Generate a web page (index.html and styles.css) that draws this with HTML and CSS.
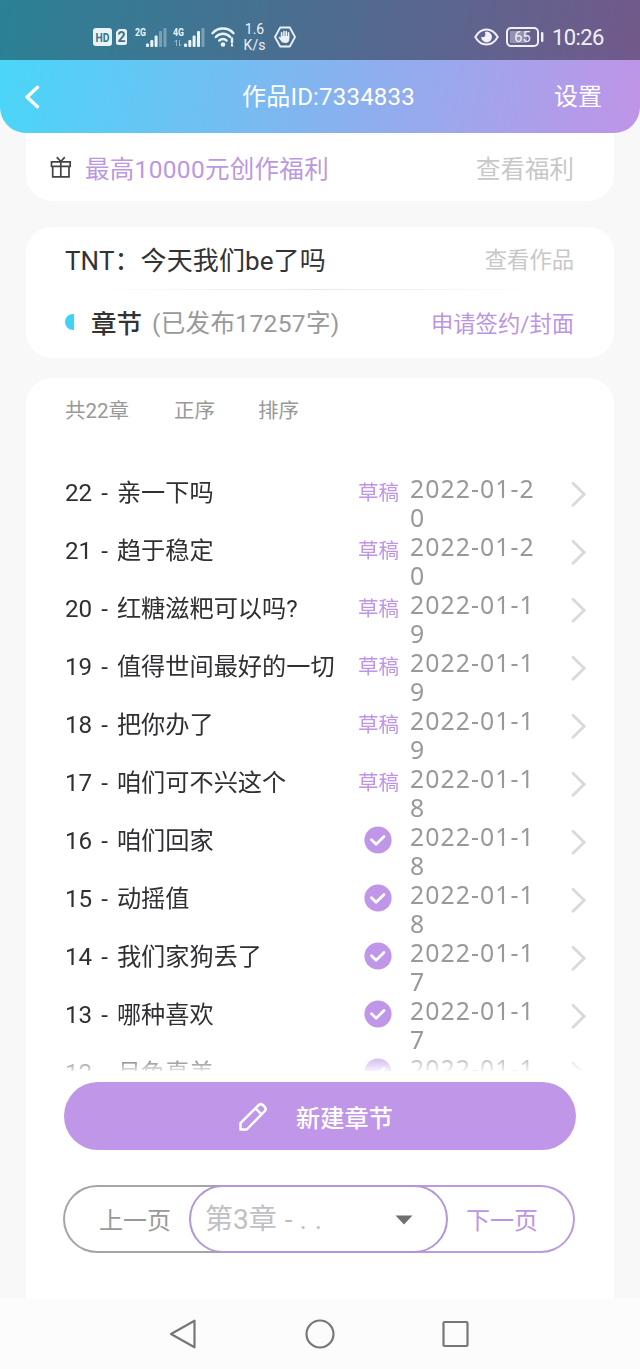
FILE: index.html
```html
<!DOCTYPE html>
<html lang="zh-CN">
<head>
    <meta charset="UTF-8">
    <meta name="viewport" content="width=device-width, initial-scale=1.0">
    <title>作品管理</title>
    <link rel="stylesheet" href="styles.css">
</head>
<body>

<svg class="symbols" width="0" height="0">
    <symbol id="check" viewBox="0 0 28 28">
        <circle cx="14" cy="14" r="13.6" fill="#bf96e8"/>
        <path d="M7.5 13.8l4.6 4.4 7.9-7.7" fill="none" stroke="#fff" stroke-width="2.8" stroke-linecap="round" stroke-linejoin="round"/>
    </symbol>
    <symbol id="arrow" viewBox="0 0 16 26">
        <path d="M2 2.3l11.2 10.9L2 24.2" fill="none" stroke="#d9d9d9" stroke-width="2.8" stroke-linecap="round"/>
    </symbol>
</svg>

<div class="top">
    <div class="status-bar">
        <svg class="hd" width="35" height="20" viewBox="0 0 35 20">
            <rect x="0" y="1" width="19" height="18" rx="3" fill="#eaf4f8"/>
            <text x="9.5" y="14.5" font-size="12" font-weight="700" fill="#3b7389" text-anchor="middle" textLength="14" lengthAdjust="spacingAndGlyphs">HD</text>
            <path d="M26 2h5.500a2.500 2.500 0 0 1 2.500 2.500v11a2.500 2.500 0 0 1-2.500 2.500H25.500a2.500 2.500 0 0 1-2.500-2.500V5z" fill="#eaf4f8"/>
            <text x="28.500" y="15" font-size="14" font-weight="700" fill="#3b7389" text-anchor="middle">2</text>
        </svg>
        <svg class="signal" width="33" height="22" viewBox="0 0 33 22">
            <text x="0" y="10" font-size="11.500" font-weight="700" fill="#eaf4f8" textLength="11" lengthAdjust="spacingAndGlyphs">2G</text>
            <g fill="#eaf4f8">
                <rect x="11" y="17.500" width="3" height="3.500" rx="1"/>
                <rect x="15.300" y="14" width="3" height="7" rx="1"/>
                <rect x="19.600" y="9.500" width="3" height="11.500" rx="1"/>
                <rect x="24" y="5" width="3" height="16" rx="1" opacity=".35"/>
                <rect x="28.500" y="2" width="3" height="19" rx="1" opacity=".35"/>
            </g>
        </svg>
        <svg class="signal" width="33" height="22" viewBox="0 0 33 22">
            <text x="0" y="10" font-size="11.500" font-weight="700" fill="#eaf4f8" textLength="11" lengthAdjust="spacingAndGlyphs">4G</text>
            <path d="M3.500 20v-6l-2 2M6.500 14v6l2-2" fill="none" stroke="#eaf4f8" opacity=".5"/>
            <g fill="#eaf4f8">
                <rect x="11" y="17.500" width="3" height="3.500" rx="1"/>
                <rect x="15.300" y="14" width="3" height="7" rx="1"/>
                <rect x="19.600" y="9.500" width="3" height="11.500" rx="1"/>
                <rect x="24" y="5" width="3" height="16" rx="1"/>
                <rect x="28.500" y="2" width="3" height="19" rx="1" opacity=".35"/>
            </g>
        </svg>
        <svg class="wifi" width="24" height="22" viewBox="0 0 24 22">
            <g fill="none" stroke="#eaf4f8" stroke-width="2.400" stroke-linecap="round">
                <path d="M1.500 7.200c5.500-6.200 15.500-6.200 21 0"/>
                <path d="M4.800 11c4-4.300 10.400-4.300 14.400 0"/>
                <path d="M8.200 14.600c2.200-2.200 5.400-2.200 7.400 0"/>
                <path d="M21 12.500v4M21 19.300v.1"/>
            </g>
            <circle cx="12" cy="18.500" r="2.300" fill="#eaf4f8"/>
        </svg>
        <div class="speed">1.6<br>K/s</div>
        <svg class="hand" width="22" height="22" viewBox="0 0 22 22">
            <path d="M6.200 1.500h9.600L21 11l-5.200 9.500H6.200L1 11z" fill="none" stroke="#eaf1f8" stroke-width="1.800" stroke-linejoin="round"/>
            <path d="M7.600 12V6.800M9.900 10V5.500M12.200 10V5.500M14.500 12V6.800M5.500 11.500l3 4" stroke="#eaf1f8" stroke-width="1.600" stroke-linecap="round"/>
            <path d="M6.800 10h8.500v3q0 4-4 4-3 0-4.500-3.500z" fill="#eaf1f8"/>
        </svg>
        <svg class="eye" width="25" height="18" viewBox="0 0 25 18">
            <path d="M1.300 9C7-1 18-1 23.700 9 18 19 7 19 1.300 9z" fill="none" stroke="#f1eff8" stroke-width="2"/>
            <path d="M12.500 3.600a5.400 5.400 0 1 1-5.300 5q2 1.200 3.500-.2 1.200-1.500.2-4.400z" fill="#f1eff8"/>
        </svg>
        <svg class="battery" width="38" height="20" viewBox="0 0 38 20">
            <rect x="1" y="1" width="31" height="18" rx="4" fill="none" stroke="#f1eff8" stroke-width="2"/>
            <rect x="4" y="4" width="17" height="12" rx="1" fill="#f1eff8" opacity=".35"/>
            <rect x="35" y="5" width="2.400" height="10" rx="1" fill="#f1eff8"/>
            <text x="16.500" y="15" font-size="14.500" fill="#f1eff8" text-anchor="middle">65</text>
        </svg>
        <div class="time">10:26</div>
    </div>
    <div class="header">
        <svg class="back" width="16" height="24" viewBox="0 0 16 24">
            <path d="M13.500 2.300L3 12l10.500 9.700" fill="none" stroke="#fff" stroke-width="3.400" stroke-linecap="round" stroke-linejoin="round"/>
        </svg>
        <h1>作品ID:7334833</h1>
        <a class="settings">设置</a>
    </div>
</div>

<div class="card welfare">
    <svg class="gift" width="22" height="23" viewBox="0 0 22 23">
        <path d="M1.500 5.800h18.700v4.500H1.500zM2.700 10.300v10.500H19V10.300M10.800 5.800v15M6.800 1.200l4 4.300 4-4.300" fill="none" stroke="#444" stroke-width="1.700"/>
    </svg>
    <span class="welfare-title">最高10000元创作福利</span>
    <span class="more">查看福利</span>
</div>

<div class="card work">
    <div class="work-row">
        <span class="work-title">TNT：<span>今天我们be了吗</span></span>
        <span class="more">查看作品</span>
    </div>
    <div class="divider"></div>
    <div class="work-row chapter-row">
        <span class="half-dot"></span>
        <span class="chapter-label">章节</span>
        <span class="count">(已发布17257字)</span>
        <span class="apply">申请签约/封面</span>
    </div>
</div>

<div class="card chapters">
    <div class="toolbar">
        <span class="total">共22章</span>
        <span class="order">正序</span>
        <span>排序</span>
    </div>
    <div class="list">
        <div class="row">
            <span class="name">22 - <b>亲一下吗</b></span>
            <span class="state">草稿</span>
            <span class="date">2022-01-20</span>
            <svg class="arrow"><use href="#arrow"/></svg>
        </div>
        <div class="row">
            <span class="name">21 - <b>趋于稳定</b></span>
            <span class="state">草稿</span>
            <span class="date">2022-01-20</span>
            <svg class="arrow"><use href="#arrow"/></svg>
        </div>
        <div class="row">
            <span class="name">20 - <b>红糖滋粑可以吗?</b></span>
            <span class="state">草稿</span>
            <span class="date">2022-01-19</span>
            <svg class="arrow"><use href="#arrow"/></svg>
        </div>
        <div class="row">
            <span class="name">19 - <b>值得世间最好的一切</b></span>
            <span class="state">草稿</span>
            <span class="date">2022-01-19</span>
            <svg class="arrow"><use href="#arrow"/></svg>
        </div>
        <div class="row">
            <span class="name">18 - <b>把你办了</b></span>
            <span class="state">草稿</span>
            <span class="date">2022-01-19</span>
            <svg class="arrow"><use href="#arrow"/></svg>
        </div>
        <div class="row">
            <span class="name">17 - <b>咱们可不兴这个</b></span>
            <span class="state">草稿</span>
            <span class="date">2022-01-18</span>
            <svg class="arrow"><use href="#arrow"/></svg>
        </div>
        <div class="row">
            <span class="name">16 - <b>咱们回家</b></span>
            <span class="state"><svg class="check"><use href="#check"/></svg></span>
            <span class="date">2022-01-18</span>
            <svg class="arrow"><use href="#arrow"/></svg>
        </div>
        <div class="row">
            <span class="name">15 - <b>动摇值</b></span>
            <span class="state"><svg class="check"><use href="#check"/></svg></span>
            <span class="date">2022-01-18</span>
            <svg class="arrow"><use href="#arrow"/></svg>
        </div>
        <div class="row">
            <span class="name">14 - <b>我们家狗丢了</b></span>
            <span class="state"><svg class="check"><use href="#check"/></svg></span>
            <span class="date">2022-01-17</span>
            <svg class="arrow"><use href="#arrow"/></svg>
        </div>
        <div class="row">
            <span class="name">13 - <b>哪种喜欢</b></span>
            <span class="state"><svg class="check"><use href="#check"/></svg></span>
            <span class="date">2022-01-17</span>
            <svg class="arrow"><use href="#arrow"/></svg>
        </div>
        <div class="row">
            <span class="name">12 - <b>月色真美</b></span>
            <span class="state"><svg class="check"><use href="#check"/></svg></span>
            <span class="date">2022-01-17</span>
            <svg class="arrow"><use href="#arrow"/></svg>
        </div>
    </div>

    <button class="create">
        <svg width="30" height="30" viewBox="0 0 30 30">
            <path d="M2.500 27.500v-6.300L20.800 3q2-1.700 4 0l2 2q1.700 2 0 4L8.800 27.500zM17.500 6.300l6 6" fill="none" stroke="#fff" stroke-width="2.500" stroke-linejoin="round"/>
        </svg>
        <span>新建章节</span>
    </button>

    <div class="pager">
        <div class="prev">上一页</div>
        <div class="select">
            <span>第3章 -<i>. .</i></span>
            <svg width="18" height="10" viewBox="0 0 18 10"><path d="M.5.500h17L9 9.500z" fill="#6f6f6f"/></svg>
        </div>
        <div class="next">下一页</div>
    </div>
</div>

<div class="nav-bar">
    <svg width="30" height="32" viewBox="0 0 30 32">
        <path d="M25.500 2.700v26.600L2 16z" fill="none" stroke="#777" stroke-width="2.200" stroke-linejoin="round"/>
    </svg>
    <svg width="30" height="32" viewBox="0 0 30 32">
        <circle cx="15" cy="16" r="13.500" fill="none" stroke="#777" stroke-width="2.200"/>
    </svg>
    <svg width="30" height="32" viewBox="0 0 30 32">
        <rect x="2.500" y="4" width="24" height="24" rx="1" fill="none" stroke="#777" stroke-width="2.200"/>
    </svg>
</div>

</body>
</html>
```
FILE: styles.css
```css
* {
    box-sizing: border-box;
}
body {
    margin: 0;
    height: 1369px;
    display: flex;
    flex-direction: column;
    overflow: hidden;
    background-color: #f8f8f8;
    font-family: Roboto, "Noto Sans CJK SC", sans-serif;
    color: #333;
    white-space: nowrap;
}
svg {
    display: block;
    flex: none;
}
.symbols {
    position: absolute;
}

/* status bar + header share one gradient */
.top {
    flex: none;
    height: 133px;
    border-radius: 0 0 26px 26px;
    overflow: hidden;
    background: linear-gradient(100deg, #48d7f8, #83b4f0 50%, #c094e7);
    color: #fff;
}
.status-bar {
    display: flex;
    align-items: center;
    height: 60px;
    padding: 13px 36px 0 93px;
    background-color: rgba(0, 0, 0, 0.4);
    color: #eef2f8;
}
.signal {
    margin-left: 7px;
    margin-right: -2px;
}
.wifi {
    margin-left: 7px;
}
.speed {
    width: 39px;
    font-size: 14px;
    line-height: 16px;
    text-align: center;
}
.eye {
    margin-left: auto;
}
.battery {
    margin: 0 8px 0 7px;
}
.time {
    font-size: 22px;
    width: 52px;
    letter-spacing: -0.600px;
    line-height: 26px;
    padding-top: 2px;
}
.header {
    display: grid;
    grid-template-columns: 100px 1fr 100px;
    align-items: center;
    height: 73px;
    padding: 0 38px 0 24px;
}
.header h1 {
    margin: 0;
    padding-left: 31px;
    font-size: 24px;
    letter-spacing: 0.200px;
    font-weight: 400;
    text-align: center;
}
.header h1, .settings {
    line-height: 36px;
}
.settings {
    font-size: 24px;
    text-align: right;
}

.card {
    flex: none;
    margin: 0 26px;
    background-color: #fff;
    border-radius: 26px;
}
.more {
    margin-left: auto;
    color: #c8c8c8;
}
.welfare {
    display: flex;
    align-items: center;
    height: 68px;
    padding: 1px 40px 0 24px;
    border-radius: 0 0 26px 26px;
    font-size: 24.500px;
}
.welfare-title {
    margin-left: 13px;
    letter-spacing: 0.300px;
    color: #bc98e0;
}

.work {
    height: 131px;
    margin-top: 26px;
    padding: 0 40px 0 39px;
    font-size: 22.300px;
}
.work-row {
    display: flex;
    align-items: center;
    height: 62px;
}
.work-title {
    font-size: 26px;
    letter-spacing: 0.100px;
}
.divider {
    height: 1px;
    margin: 0 28px 0 20px;
    background: linear-gradient(90deg, #fff, #e8e8e8 50%, #fff);
}
.chapter-row {
    height: 63px;
}
.half-dot {
    width: 9px;
    height: 16px;
    border-radius: 8px 0 0 8px;
    background-color: #3fd2f5;
}
.chapter-label {
    margin-left: 17px;
    font-size: 25.500px;
    font-weight: 500;
}
.count {
    margin-left: 10px;
    font-size: 24.500px;
    letter-spacing: 0.350px;
    color: #999;
}
.apply {
    margin-left: auto;
    font-size: 22.300px;
    color: #bc94e4;
}

.chapters {
    height: 921px;
    margin-top: 20px;
    border-radius: 26px 26px 0 0;
}
.toolbar {
    display: flex;
    align-items: center;
    height: 62px;
    padding-left: 39px;
    font-size: 20.500px;
    color: #999;
}
.total {
    width: 109px;
}
.order {
    width: 84px;
}
.list {
    height: 607px;
    margin-top: 24px;
    padding: 10px 0 0 39px;
    overflow: hidden;
    -webkit-mask-image: linear-gradient(#000 586px, transparent 610px);
    mask-image: linear-gradient(#000 586px, transparent 610px);
}
.row {
    display: grid;
    grid-template-columns: 287px 58px 161px 16px;
    height: 58.050px;
}
.name {
    padding-top: 1px;
    font-size: 24.200px;
    line-height: 36px;
    color: #303034;
    word-spacing: 3px;
}
.name b {
    font-weight: 400;
}
.state {
    height: 36px;
    margin-left: 6px;
    font-size: 20.500px;
    line-height: 38px;
    color: #bf96e6;
}
.check {
    width: 28px;
    height: 28px;
    margin: 4px 0 0 6px;
}
.date {
    width: 130px;
    font-family: "Noto Sans", sans-serif;
    font-size: 24.800px;
    line-height: 29px;
    letter-spacing: 1.050px;
    color: #999;
    white-space: normal;
    word-break: break-all;
}
.arrow {
    width: 16px;
    height: 26px;
    margin-top: 7px;
}

.create {
    display: flex;
    align-items: center;
    justify-content: center;
    gap: 28px;
    width: 512px;
    height: 68px;
    margin: 11px 0 0 38px;
    padding: 1px 9px 0 0;
    border: none;
    border-radius: 34px;
    background-color: #bf96e8;
    color: #fff;
    font-family: inherit;
    font-size: 24.200px;
    font-weight: 500;
}

.pager {
    display: flex;
    height: 68px;
    margin: 35px 39px 0 37px;
    font-size: 24px;
    line-height: 68px;
}
.prev, .next {
    width: 160px;
    border: 2px solid #a5a5a5;
    color: #999;
}
.prev {
    padding-left: 34px;
    border-right: none;
    border-radius: 34px 0 0 34px;
}
.next {
    flex: 1;
    padding-right: 35px;
    border-left: none;
    border-radius: 0 34px 34px 0;
    border-color: #bc9bdd;
    color: #bc94e4;
    text-align: right;
}
.select {
    display: flex;
    align-items: center;
    justify-content: space-between;
    width: 259px;
    height: 68px;
    margin: 0 -34px;
    padding: 2px 33px 0 14px;
    z-index: 1;
    border: 2px solid #b496d6;
    border-radius: 34px;
    background-color: #fff;
    font-size: 28px;
    color: #c0c0c4;
}
.select span {
    word-spacing: 1px;
}
.select i {
    font-style: normal;
    margin-left: 7px;
}

.nav-bar {
    display: flex;
    justify-content: center;
    align-items: center;
    gap: 106px;
    flex: none;
    height: 70px;
    background-color: #fcfcfc;
}
```
